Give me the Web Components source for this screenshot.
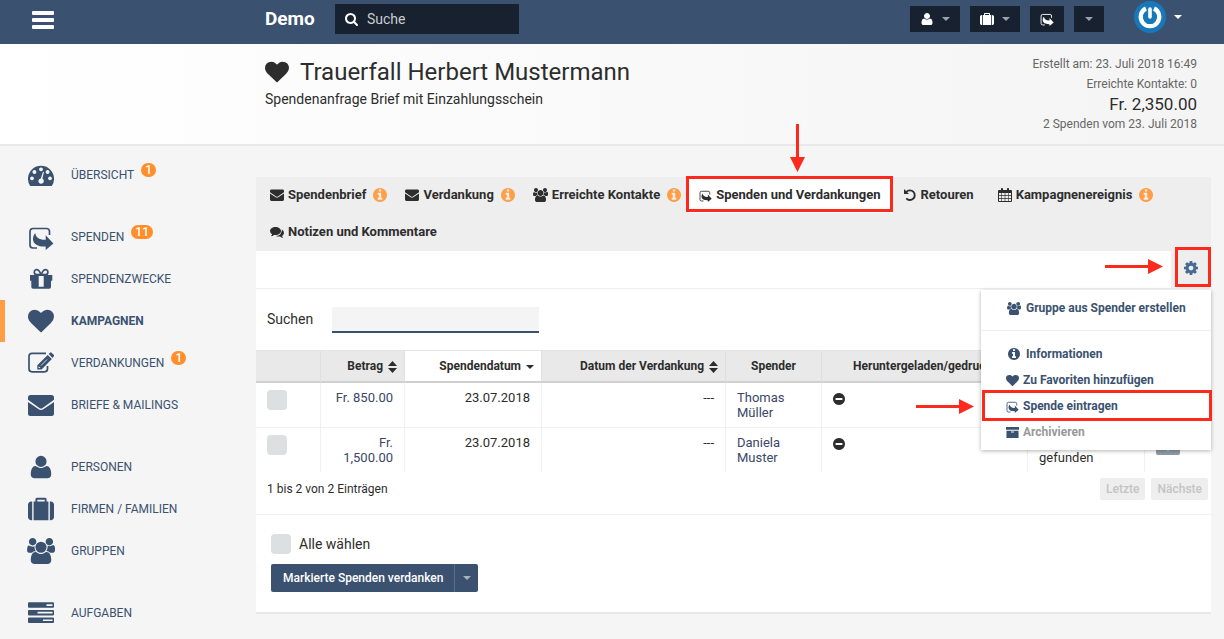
<!DOCTYPE html>
<html lang="de">
<head>
<meta charset="utf-8">
<title>Trauerfall Herbert Mustermann</title>
<style>
  html { height: 100%; }
  body { margin: 0; min-height: 100%; background: #f5f5f5; color: #2d2d2d; font-family: Roboto, "Liberation Sans", sans-serif; font-size: 13px; line-height: 20px; }
</style>
</head>
<body>
<campaign-page></campaign-page>

<script>
const define = (tag, css, html, setup) => {
  const template = document.createElement('template');
  template.innerHTML = `<style>*,*::before,*::after{box-sizing:border-box}${css}</style>${html}`;
  customElements.define(tag, class extends HTMLElement {
    constructor() {
      super();
      this.attachShadow({ mode: 'open' }).append(template.content.cloneNode(true));
    }
    connectedCallback() { if (setup) setup(this, this.shadowRoot); }
  });
};

const disc = 'M1664 896q0 209-103 385.5t-279.5 279.5-385.5 103-385.5-103-279.5-279.5-103-385.5 103-385.5 279.5-279.5 385.5-103 385.5 103 279.5 279.5 103 385.5z';
const ICONS = {
  heart: ['0 0 1792 1792', '<path d="M896 1664q-26 0-44-18l-624-602q-10-8-27.500-26t-55.500-65.500-68-97.500-53.500-121-23.500-138q0-220 127-344t351-124q62 0 126.500 21.500t120 58 95.500 68.500 76 68q36-36 76-68t95.500-68.500 120-58 126.500-21.500q224 0 351 124t127 344q0 221-229 450l-623 600q-18 18-44 18z"/>'],
  user: ['0 0 1792 1792', '<path d="M1600 1405q0 120-73 189.500t-194 69.500h-874q-121 0-194-69.500t-73-189.500q0-53 3.500-103.500t14-109 26.500-108.500 43-97.500 62-81 85.500-53.500 111.500-20q9 0 42 21.500t74.500 48 108 48 133.500 21.500 133.500-21.500 108-48 74.500-48 42-21.500q61 0 111.500 20t85.500 53.500 62 81 43 97.500 26.500 108.500 14 109 3.500 103.500zm-320-893q0 159-112.500 271.500t-271.500 112.500-271.500-112.500-112.500-271.500 112.500-271.500 271.500-112.500 271.500 112.500 112.500 271.500z"/>'],
  suitcase: ['0 0 1792 1792', '<path d="M640 384h512v-128h-512v128zm-352 0v1280h-64q-92 0-158-66t-66-158v-832q0-92 66-158t158-66h64zm1120 0v1280h-1024v-1280h128v-160q0-40 28-68t68-28h576q40 0 68 28t28 68v160h128zm384 224v832q0 92-66 158t-158 66h-64v-1280h64q92 0 158 66t66 158z"/>'],
  users: ['0 0 1920 1792', '<path d="M593 896q-162 5-265 128h-134q-82 0-138-40.500t-56-118.500q0-353 124-353 6 0 43.500 21t97.500 42.500 119 21.500q67 0 133-23-5 37-5 66 0 159 93 293zm1071 637q0 120-73 189.500t-194 69.500h-874q-121 0-194-69.500t-73-189.500q0-53 3.500-103.500t14-109 26.500-108.500 43-97.500 62-81 85.500-53.500 111.500-20q10 0 43 21.500t73 48 107 48 135 21.500 135-21.500 107-48 73-48 43-21.500q61 0 111.500 20t85.500 53.500 62 81 43 97.500 26.500 108.500 14 109 3.500 103.500zm-1024-1277q0 106-75 181t-181 75-181-75-75-181 75-181 181-75 181 75 75 181zm704 384q0 159-112.500 271.500t-271.500 112.500-271.500-112.500-112.500-271.500 112.500-271.500 271.500-112.500 271.500 112.500 112.500 271.500zm576 225q0 78-56 118.500t-138 40.500h-134q-103-123-265-128 93-134 93-293 0-29-5-66 66 23 133 23 59 0 119-21.500t97.500-42.500 43.500-21q124 0 124 353zm-128-609q0 106-75 181t-181 75-181-75-75-181 75-181 181-75 181 75 75 181z"/>'],
  info: ['128 128 1536 1536', `<path d="M1152 1376v-160q0-14-9-23t-23-9h-96v-512q0-14-9-23t-23-9h-320q-14 0-23 9t-9 23v160q0 14 9 23t23 9h96v320h-96q-14 0-23 9t-9 23v160q0 14 9 23t23 9h448q14 0 23-9t9-23zm-128-896v-160q0-14-9-23t-23-9h-192q-14 0-23 9t-9 23v160q0 14 9 23t23 9h192q14 0 23-9t9-23z${disc}" fill-rule="evenodd"/>`],
  minus: ['128 128 1536 1536', `<path d="M1344 960v-128q0-26-19-45t-45-19h-768q-26 0-45 19t-19 45v128q0 26 19 45t45 19h768q26 0 45-19t19-45z${disc}" fill-rule="evenodd"/>`],
  cog: ['128 128 1536 1536', '<path d="M1152 896q0-106-75-181t-181-75-181 75-75 181 75 181 181 75 181-75 75-181zm512-109v222q0 12-8 23t-20 13l-185 28q-19 54-39 91 35 50 107 138 10 12 10 25t-9 23q-27 37-99 108t-94 71q-12 0-26-9l-138-108q-44 23-91 38-16 136-29 186-7 28-36 28h-222q-14 0-24.500-8.500t-11.500-21.500l-28-184q-49-16-90-37l-141 107q-10 9-25 9-14 0-25-11-126-114-165-168-7-10-7-23 0-12 8-23 15-21 51-66.500t54-70.500q-27-50-41-99l-183-27q-13-2-21-12.500t-8-23.500v-222q0-12 8-23t19-13l186-28q14-46 39-92-40-57-107-138-10-12-10-24 0-10 9-23 26-36 98.500-107.500t94.500-71.500q13 0 26 10l138 107q44-23 91-38 16-136 29-186 7-28 36-28h222q14 0 24.500 8.500t11.500 21.500l28 184q49 16 90 37l142-107q9-9 24-9 13 0 25 10 129 119 165 170 7 8 7 22 0 12-8 23-15 21-51 66.500t-54 70.500q26 50 41 98l183 28q13 2 21 12.500t8 23.500z"/>'],
  search: ['64 128 1664 1664', '<path d="M1216 832q0-185-131.500-316.500t-316.500-131.500-316.500 131.500-131.500 316.500 131.500 316.500 316.500 131.500 316.500-131.500 131.500-316.500zm512 832q0 52-38 90t-90 38q-54 0-90-38l-343-342q-179 124-399 124-143 0-273.500-55.500t-225-150-150-225-55.500-273.500 55.500-273.500 150-225 225-150 273.500-55.500 273.500 55.500 225 150 150 225 55.500 273.500q0 220-124 399l343 343q37 37 37 90z"/>'],
  donate: ['0 -2 26 26', '<path d="M21.500 9V5.500a3 3 0 0 0-3-3H5a3 3 0 0 0-3 3V19a3 3 0 0 0 3 3h4" fill="none" stroke="currentColor" stroke-width="1.700"/><path d="M7.200 7C8 11.500 11 14 17.700 13.800V9.200l7.700 8.200-7.700 6.600v-3.400C10 20.800 5.500 18.500 5 13.500 4.900 11 5.700 8.800 7.200 7z"/>'],
  edit: ['0 0 26 26', '<path d="M18 3.300H4a3 3 0 0 0-3 3v12.500a3 3 0 0 0 3 3h12.500a3 3 0 0 0 3-3V16" fill="none" stroke="currentColor" stroke-width="1.700"/><path d="M9.300 19.500v-4.300L19.700 4.900l4.200 4.200-10.300 10.400zm1.300-3.300v1.900h1.900z M20.700 4l1.300-1.300q.8-.8 1.600 0l2.100 2.100q.8.800 0 1.600L24.500 8z" fill-rule="evenodd"/><path d="M13 15.500l6-6" stroke="#f5f5f5" stroke-width=".8"/>'],
  gift: ['0 0 26 26', '<path d="M2 9h22.300v5.800H23V21a1.700 1.700 0 0 1-1.700 1.700H5A1.700 1.700 0 0 1 3.300 21v-6.200H2zm8.700 1v10.700h5V10z" fill-rule="evenodd"/><path d="M13 8.700C11.500 4.500 9.500 3.300 7.800 3.800 5.600 4.600 5.600 8.600 9 8.700zM13.200 8.700c1.500-4.200 3.500-5.400 5.200-4.900 2.200.8 2.200 4.800-1.200 4.900z" fill="none" stroke="currentColor" stroke-width="1.700"/>'],
  gauge: ['0 0 26 26', '<path fill-rule="evenodd" d="M2.200 24A13 13 0 1 1 23.800 24zM4 14.500a1.900 1.900 0 1 0 .01 0zM6.400 8.100a1.900 1.900 0 1 0 .01 0zM13 5.400a1.900 1.900 0 1 0 .01 0zM19.600 8.100a1.900 1.900 0 1 0 .01 0zM22 14.500a1.900 1.900 0 1 0 .01 0zM15 9.800l-2.200 6.600a2.700 2.700 0 1 0 1.600.3l1.500-6.600z"/>'],
  mail: ['0 0 26 26', '<path d="M2.500 3h21A2.500 2.500 0 0 1 26 5.500v2.300L14.600 16q-1.600 1.200-3.200 0L0 7.800V5.500A2.500 2.500 0 0 1 2.500 3zM0 10l10.700 7.200q2.300 1.400 4.600 0L26 10v11.500a2.500 2.500 0 0 1-2.500 2.500h-21A2.500 2.500 0 0 1 0 21.500z"/>'],
  tasks: ['0 0 26 26', '<path fill-rule="evenodd" d="M1 2.300h24q1 0 1 1v3.500q0 1-1 1H1q-1 0-1-1V3.300q0-1 1-1zM18.500 4.200v1.700h6V4.200zM1 9.900h24q1 0 1 1v3.500q0 1-1 1H1q-1 0-1-1v-3.500q0-1 1-1zM9.500 11.800v1.700h15v-1.700zM1 17.500h24q1 0 1 1V22q0 1-1 1H1q-1 0-1-1v-3.500q0-1 1-1zM15 19.400v1.700h9.500v-1.700z"/>'],
  comments: ['0 0 14 14', '<path d="M5.500 2C8.600 2 11 3.700 11 6s-2.400 4-5.500 4q-.7 0-1.400-.1Q2.700 11 .9 11.200q.9-.8 1.100-2Q0 8 0 6c0-2.300 2.400-4 5.500-4z"/><path d="M11.900 4.500Q14 5.700 14 7.800q0 1.800-1.900 3.100.2 1.200 1.100 2-1.800-.2-3.200-1.400-2.200.4-4-.6 5.700-.3 5.900-6.400z"/>'],
  undo: ['0 0 12 12', '<path d="M2.300 3A4.800 4.800 0 1 1 2.300 9.300" fill="none" stroke="currentColor" stroke-width="1.900"/><path d="M0 0v5h5z"/>'],
  calendar: ['0 0 14 14', '<path fill-rule="evenodd" d="M1 2h2V.7q0-.7.700-.7h.6q.7 0 .7.700V2h4V.7q0-.7.700-.7h.6q.7 0 .7.700V2h2q1 0 1 1v10q0 1-1 1H1q-1 0-1-1V3q0-1 1-1zM1 5v2.300h2.400V5zM4 5v2.300h2.700V5zM7.300 5v2.300H10V5zM10.600 5v2.300H13V5zM1 8v2.300h2.400V8zM4 8v2.300h2.700V8zM7.300 8v2.300H10V8zM10.600 8v2.300H13V8zM1 11v2h2.400v-2zM4 11v2h2.700v-2zM7.300 11v2H10v-2zM10.600 11v2H13v-2z"/>'],
  archive: ['0 0 14 14', '<path fill-rule="evenodd" d="M0 1h14v3H0zM.5 5h13v8H.5zM5.500 6v1h3V6z"/>'],
  caret: ['0 0 8 4', '<path d="M0 0h8L4 4z"/>'],
  sort: ['0 0 9 12', '<path d="M0 5h9L4.500 0zM0 7h9l-4.500 5z"/>'],
  download: ['0 0 12 12', '<path d="M4 0h4v6h4l-6 6-6-6h4z"/>'],
  power: ['0 0 32 32', '<circle cx="16" cy="16" r="16" fill="#1779ba"/><path d="M12 7.500A9.300 9.300 0 1 0 20 7.500" fill="none" stroke="#fff" stroke-width="4.200"/><path d="M16 8v8" stroke="#fff" stroke-width="3.600" stroke-linecap="round"/>']
};

define('app-icon', `:host{display:inline-flex;flex:none;vertical-align:middle}svg{display:block;fill:currentColor}`,
  `<svg aria-hidden="true"></svg>`,
  (el, root) => {
    const [box, shape] = ICONS[el.getAttribute('name')];
    const [, , w, h] = box.split(' ').map(Number);
    const size = Number(el.getAttribute('size') || 14);
    const svg = root.querySelector('svg');
    svg.setAttribute('viewBox', box);
    svg.setAttribute('height', size);
    svg.setAttribute('width', Math.round(size * w / h));
    svg.innerHTML = shape;
  });

/* Red pointer used to guide the reader to a control. */
define('guide-arrow', `:host{display:block}svg{display:block}`, `<svg aria-hidden="true" fill="#fc2a1c"></svg>`,
  (el, root) => {
    const svg = root.querySelector('svg');
    const down = el.hasAttribute('down');
    svg.setAttribute('width', down ? 15 : 58);
    svg.setAttribute('height', down ? 48 : 15);
    svg.innerHTML = down
      ? '<path d="M6 0h3v33h6L7.500 48 0 33h6z"/>'
      : '<path d="M0 6h43V0l15 7.500L43 15V9H0z"/>';
  });

define('top-button', `:host{display:block}
  button{display:flex;align-items:center;gap:8px;height:26px;padding:0 10px;border:0;background:#17212f;color:#fff;cursor:pointer}
  :host([small]) button{padding:0 11px}`,
  `<button type="button"><slot></slot></button>`,
  (el, root) => {
    root.querySelector('button').setAttribute('aria-label', el.getAttribute('label'));
  });

define('top-bar', `:host{display:flex;align-items:flex-start;height:44px;background:#3a5270;color:#fff}
  .side{flex:none;width:265px;padding:11px 0 0 32px}
  .burger{display:flex;flex-direction:column;gap:3px;width:22px;padding:0;border:0;background:none}
  .burger i{height:4px;width:22px;border-radius:1px;background:#fff}
  .brand{color:#fff;font-size:19px;font-weight:700;line-height:20px;margin-top:9px;width:70px;text-decoration:none}
  form{display:flex;align-items:center;gap:9px;width:184px;height:30px;margin:4px auto 0 0;padding:0 10px;background:#17212f}
  input{min-width:0;flex:1;border:0;padding:0;background:none;color:#ccc;font:14px Roboto,sans-serif;outline:0}
  input::placeholder{color:#ccc;opacity:1}
  nav{display:flex;gap:10px;margin-top:6px}
  .faint{color:#9aa3ad}
  .account{display:flex;align-items:center;gap:8px;margin:1px 42px 0 30px;padding:0;border:0;background:none;color:#fff}`,
  `<div class="side"><button class="burger" type="button" aria-label="Menü"><i></i><i></i><i></i></button></div>
   <a class="brand" href="#">Demo</a>
   <form><app-icon name="search" size="13"></app-icon><input type="search" placeholder="Suche" aria-label="Suche"></form>
   <nav>
     <top-button label="Person"><app-icon name="user"></app-icon><app-icon class="faint" name="caret" size="4"></app-icon></top-button>
     <top-button label="Firma"><app-icon name="suitcase"></app-icon><app-icon class="faint" name="caret" size="4"></app-icon></top-button>
     <top-button label="Spende"><app-icon name="donate"></app-icon></top-button>
     <top-button label="Mehr" small><app-icon class="faint" name="caret" size="4"></app-icon></top-button>
   </nav>
   <button class="account" type="button" aria-label="Konto"><app-icon name="power" size="32"></app-icon><app-icon name="caret" size="4"></app-icon></button>`);

define('page-title', `:host{display:flex;justify-content:space-between;height:102px;padding:10px 27px 0 265px;border-bottom:2px solid #e8e8e8;background:linear-gradient(90deg,#fff,#f4f4f4)}
  h1{display:flex;align-items:center;gap:11px;margin:0;font-size:24px;font-weight:400;line-height:36px}
  p{margin:0}
  .sub{font-size:14px;line-height:18px}
  .meta{text-align:right;color:#666;font-size:12px}
  .sum{font-size:17px;color:#2d2d2d}`,
  `<div><h1><app-icon name="heart" size="24"></app-icon>Trauerfall Herbert Mustermann</h1>
   <p class="sub">Spendenanfrage Brief mit Einzahlungsschein</p></div>
   <div class="meta"><p>Erstellt am: 23. Juli 2018 16:49</p><p>Erreichte Kontakte: 0</p><p class="sum">Fr. 2,350.00</p><p>2 Spenden vom 23. Juli 2018</p></div>`);

define('nav-item', `:host{display:block}
  :host([gap]){margin-top:20px}
  a{display:flex;align-items:center;height:42px;padding-left:27px;color:#3a5270;font-size:12px;text-decoration:none}
  :host([active]) a{border-left:5px solid #ff9e45;padding-left:22px;font-weight:700}
  .ico{display:flex;justify-content:center;width:28px;margin-right:16px}
  .count{align-self:flex-start;min-width:15px;height:14px;margin:9px 0 0 7px;padding:0 4px;border-radius:7px;background:#ff8e2b;color:#fff;font-size:12px;font-weight:500;line-height:14px;text-align:center}`,
  `<a href="#"><span class="ico"></span><slot></slot></a>`,
  (el, root) => {
    const icon = document.createElement('app-icon');
    icon.setAttribute('name', el.getAttribute('icon'));
    icon.setAttribute('size', 26);
    root.querySelector('.ico').append(icon);
    if (el.hasAttribute('count')) {
      const badge = document.createElement('span');
      badge.className = 'count';
      badge.textContent = el.getAttribute('count');
      root.querySelector('a').append(badge);
    }
  });

define('tab-item', `:host{display:block;position:relative;height:37px}
  a{display:flex;align-items:center;height:36px;padding:0 12px;gap:4px;color:#2d2d2d;font-weight:700;text-decoration:none}
  :host([info]) a{padding-right:6px}
  .ico{display:flex}
  .hint{color:#ff9e45;margin-left:3px}
  :host([active]) a{background:#fff}
  :host([active])::after{content:"";position:absolute;inset:-1px -1px 2px;border:3px solid #fc2a1c;pointer-events:none}
  ::slotted(guide-arrow){position:absolute;left:50%;bottom:42px}`,
  `<a href="#"><span class="ico"></span><span><slot></slot></span></a><slot name="guide"></slot>`,
  (el, root) => {
    const sizes = { donate: 13, undo: 12 };
    const add = (name, parent, cls) => {
      const icon = document.createElement('app-icon');
      icon.setAttribute('name', name);
      icon.setAttribute('size', sizes[name] || 14);
      icon.className = cls;
      parent.append(icon);
    };
    add(el.getAttribute('icon'), root.querySelector('.ico'), '');
    if (el.hasAttribute('info')) add('info', root.querySelector('a'), 'hint');
  });

define('menu-item', `:host{display:block;position:relative}
  button{display:flex;align-items:center;gap:4px;width:100%;height:26px;padding:0 0 0 25px;border:0;background:none;color:#3a5270;font:700 12px/20px Roboto,sans-serif;text-align:left}
  button:disabled .text{color:#999}
  .ico{display:flex;color:#3a5270}
  :host([wide]) .ico{width:16px;justify-content:center}
  :host([marked])::after{content:"";position:absolute;inset:-3px -1px -2px 1px;border:3px solid #fc2a1c;pointer-events:none}
  ::slotted(guide-arrow){position:absolute;right:calc(100% + 7px);top:6px}`,
  `<button type="button" role="menuitem"><span class="ico"></span><span class="text"><slot></slot></span></button><slot name="guide"></slot>`,
  (el, root) => {
    const icon = document.createElement('app-icon');
    icon.setAttribute('name', el.getAttribute('icon'));
    icon.setAttribute('size', el.getAttribute('icon') === 'info' ? 12 : 13);
    root.querySelector('.ico').append(icon);
    root.querySelector('button').disabled = el.hasAttribute('disabled');
  });

define('action-menu', `:host{display:block;width:230px;padding:5px 0;background:#fff;box-shadow:0 1px 4px rgba(0,0,0,.3)}
  hr{margin:9px 0 10px;border:0;border-top:1px solid #eee}`,
  `<div role="menu"><menu-item icon="users" wide>Gruppe aus Spender erstellen</menu-item><hr>
   <menu-item icon="info" wide>Informationen</menu-item>
   <menu-item icon="heart">Zu Favoriten hinzufügen</menu-item>
   <menu-item icon="donate" marked>Spende eintragen<guide-arrow slot="guide"></guide-arrow></menu-item>
   <menu-item icon="archive" disabled>Archivieren</menu-item></div>`);

const boxCss = `input[type=checkbox]{appearance:none;display:block;width:20px;height:20px;margin:0;border-radius:4px;background:#dce0e1}`;

define('donation-table', `:host{display:block}
  ${boxCss}
  table{width:100%;table-layout:fixed;border-collapse:separate;border-spacing:0}
  th{height:33px;padding:0 7px;background:#e9e9e9;border-top:1px solid #e4e4e4;border-right:1px solid #e0e0e0;border-bottom:2px solid #d0d0d0;font-size:12px;font-weight:700;text-align:center;white-space:nowrap}
  th.num{text-align:right}
  th.now{background:#fff}
  th:last-child,td:last-child{border-right:0}
  th app-icon{margin-left:2px}
  td{height:44px;padding:7px 11px;border-right:1px solid #f0f0f0;vertical-align:top;line-height:15px}
  tr + tr td{height:45px;border-top:1px solid #f0f0f0}
  td.num{text-align:right}
  td.low{vertical-align:bottom}
  a{color:#3a4766;text-decoration:none}
  .get{display:flex;justify-content:center;width:24px;height:20px;padding:4px 0;border:0;border-radius:2px;background:#8f9aa4;color:#fff}`,
  `<table>
    <colgroup><col style="width:65px"><col style="width:84px"><col style="width:137px"><col style="width:184px"><col style="width:96px"><col style="width:206px"><col style="width:117px"><col></colgroup>
    <thead><tr><th></th><th class="num">Betrag <app-icon name="sort" size="12"></app-icon></th><th class="num now">Spendendatum <app-icon name="caret" size="4"></app-icon></th><th class="num">Datum der Verdankung <app-icon name="sort" size="12"></app-icon></th><th>Spender</th><th>Heruntergeladen/gedruckt</th><th></th><th></th></tr></thead>
    <tbody>
      <tr><td><input type="checkbox" aria-label="Spende von Thomas Müller"></td><td class="num"><a href="#">Fr. 850.00</a></td><td class="num">23.07.2018</td><td class="num">---</td><td><a href="#">Thomas Müller</a></td><td><app-icon name="minus" size="12"></app-icon></td><td></td><td></td></tr>
      <tr><td><input type="checkbox" aria-label="Spende von Daniela Muster"></td><td class="num"><a href="#">Fr. 1,500.00</a></td><td class="num">23.07.2018</td><td class="num">---</td><td><a href="#">Daniela Muster</a></td><td><app-icon name="minus" size="12"></app-icon></td><td class="low">gefunden</td><td><button class="get" type="button" aria-label="Herunterladen"><app-icon name="download" size="12"></app-icon></button></td></tr>
    </tbody></table>`);

define('campaign-panel', `:host{display:block;background:#fff;border-bottom:2px solid #e8e8e8}
  ${boxCss}
  .tabs{display:flex;flex-wrap:wrap;padding:0 2px;background:#eee}
  .tools{position:relative;display:flex;justify-content:flex-end;height:38px;border-bottom:1px solid #f0f0f0}
  .tools > guide-arrow{margin:8px 8px 0 0}
  .gear{position:relative;width:40px;padding:0 0 4px;border:0;background:#eee;color:#4a6a96}
  .gear::after{content:"";position:absolute;inset:-4px 0 1px 4px;border:3px solid #fc2a1c}
  action-menu{position:absolute;right:0;top:39px;z-index:2}
  .search{display:flex;align-items:center;padding:18px 11px 17px;font-size:14px}
  .search label{width:65px;padding-bottom:2px}
  .search input{width:207px;height:26px;padding:0 6px;border:0;border-bottom:2px solid #3a5270;background:#f4f4f4;font:inherit;outline:0}
  .pages{display:flex;align-items:center;justify-content:space-between;height:43px;padding:0 3px 8px 11px;border-bottom:1px solid #f0f0f0;font-size:12px}
  .pages div{display:flex;gap:6px}
  .pages button{height:22px;padding:0 6px;border:0;border-radius:2px;background:#eee;color:#c4c4c4;font:500 12px/22px Roboto,sans-serif}
  .foot{display:flex;flex-direction:column;align-items:flex-start;gap:10px;padding:19px 15px 20px}
  .all{display:flex;align-items:center;gap:8px;font-size:14px}
  .split{display:flex;border-radius:2px;overflow:hidden}
  .split button{display:flex;align-items:center;justify-content:center;height:28px;padding:0 11px 0 12px;border:0;background:#3a5270;color:#fff;font:500 12px/20px Roboto,sans-serif}
  .split button + button{width:24px;padding:0;border-left:1px solid #5a6e88;color:#a8b3c0}`,
  `<nav class="tabs">
     <tab-item icon="mail" info>Spendenbrief</tab-item><tab-item icon="mail" info>Verdankung</tab-item><tab-item icon="users" info>Erreichte Kontakte</tab-item>
     <tab-item icon="donate" active>Spenden und Verdankungen<guide-arrow slot="guide" down></guide-arrow></tab-item>
     <tab-item icon="undo">Retouren</tab-item><tab-item icon="calendar" info>Kampagnenereignis</tab-item><tab-item icon="comments">Notizen und Kommentare</tab-item>
   </nav>
   <div class="tools"><guide-arrow></guide-arrow><button class="gear" type="button" aria-label="Aktionen"><app-icon name="cog"></app-icon></button><action-menu></action-menu></div>
   <div class="search"><label for="q">Suchen</label><input id="q" type="text"></div>
   <donation-table></donation-table>
   <div class="pages"><span>1 bis 2 von 2 Einträgen</span><div><button type="button" disabled>Letzte</button><button type="button" disabled>Nächste</button></div></div>
   <div class="foot"><label class="all"><input type="checkbox">Alle wählen</label>
     <div class="split"><button type="button">Markierte Spenden verdanken</button><button type="button" aria-label="Weitere Aktionen"><app-icon name="caret" size="4"></app-icon></button></div></div>`);

define('campaign-page', `:host{display:block}
  .body{display:flex;align-items:flex-start}
  aside{flex:none;width:256px;padding-top:8px}
  main{flex:1;min-width:0;padding:31px 13px 0 0}`,
  `<top-bar></top-bar><page-title></page-title>
   <div class="body"><aside>
     <nav-item icon="gauge" count="1">ÜBERSICHT</nav-item>
     <nav-item icon="donate" count="11" gap>SPENDEN</nav-item><nav-item icon="gift">SPENDENZWECKE</nav-item><nav-item icon="heart" active>KAMPAGNEN</nav-item><nav-item icon="edit" count="1">VERDANKUNGEN</nav-item><nav-item icon="mail">BRIEFE &amp; MAILINGS</nav-item>
     <nav-item icon="user" gap>PERSONEN</nav-item><nav-item icon="suitcase">FIRMEN / FAMILIEN</nav-item><nav-item icon="users">GRUPPEN</nav-item>
     <nav-item icon="tasks" gap>AUFGABEN</nav-item>
   </aside><main><campaign-panel></campaign-panel></main></div>`);
</script>
</body>
</html>
